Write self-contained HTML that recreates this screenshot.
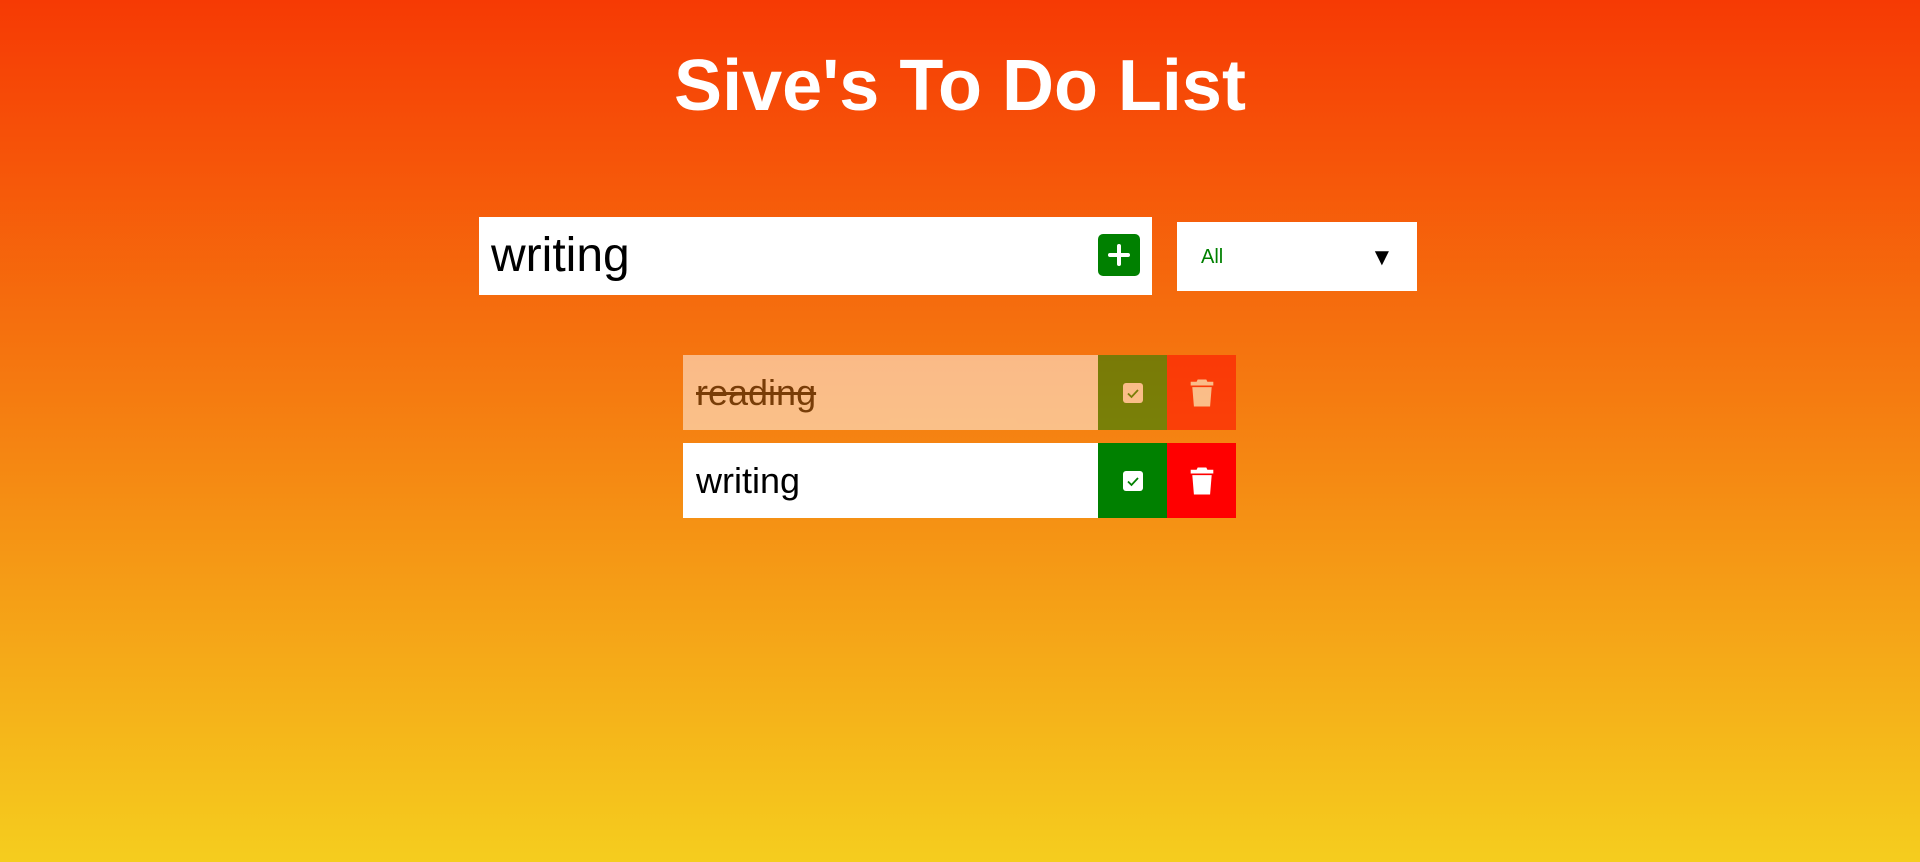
<!DOCTYPE html>
<html><head><style>
html,body{margin:0;padding:0;width:1920px;height:862px;overflow:hidden}
body{background:linear-gradient(to bottom,#f63a04 0%,#f57a10 45%,#f5cd1e 100%);font-family:"Liberation Sans",sans-serif;position:relative}
h1{position:absolute;left:0;right:0;top:40px;margin:0;text-align:center;color:#fff;font-size:72px;font-weight:bold;line-height:92px}
.input{position:absolute;left:479px;top:217px;width:673px;height:78px;background:#fff}
.input span{position:absolute;left:12px;top:12px;font-size:48px;line-height:54px;color:#000}
.plus{position:absolute;left:619px;top:17px;width:42px;height:42px;background:#008000;border-radius:5px}
.sel{position:absolute;left:1177px;top:222px;width:240px;height:69px;background:#fff}
.sel .t{position:absolute;left:24px;top:24px;font-size:20px;color:#008000}
.sel .a{position:absolute;left:193px;top:22px;font-size:24px;color:#000}
.row{position:absolute;left:683px;width:553px;height:75px;display:flex}
.row .txt{width:415px;background:#fff;font-size:36px;line-height:75px;padding-left:13px;box-sizing:border-box;color:#000}
.row .ck{width:69px;background:#008000;display:flex;align-items:center;justify-content:center}
.row .tr{width:69px;background:#ff0000;display:flex;align-items:center;justify-content:center}
.done{opacity:.5}
.done .txt{text-decoration:line-through}
</style></head><body>
<h1>Sive's To Do List</h1>
<div class="input"><span>writing</span>
<div class="plus"><svg width="42" height="42" viewBox="0 0 42 42"><path d="M21 12v18M12 21h18" stroke="#fff" stroke-width="4" stroke-linecap="round"/></svg></div></div>
<div class="sel"><span class="t">All</span><span class="a">▼</span></div>
<div class="row done" style="top:355px"><div class="txt">reading</div>
<div class="ck"><svg width="22" height="22" viewBox="0 0 22 22"><rect x="1" y="1" width="20" height="20" rx="3" fill="#fff"/><path d="M6 11.5l3.5 3.5 6.5-7" stroke="#008000" stroke-width="1.8" fill="none"/></svg></div>
<div class="tr"><svg width="24" height="28" viewBox="0 0 22 26"><path d="M7 0.5h8l1 2h5.5v3.5H0.5V2.5H6z" fill="#fff"/><path d="M2 7.5h18l-1.5 18H3.5z" fill="#fff"/></svg></div></div>
<div class="row" style="top:443px"><div class="txt">writing</div>
<div class="ck"><svg width="22" height="22" viewBox="0 0 22 22"><rect x="1" y="1" width="20" height="20" rx="3" fill="#fff"/><path d="M6 11.5l3.5 3.5 6.5-7" stroke="#008000" stroke-width="1.8" fill="none"/></svg></div>
<div class="tr"><svg width="24" height="28" viewBox="0 0 22 26"><path d="M7 0.5h8l1 2h5.5v3.5H0.5V2.5H6z" fill="#fff"/><path d="M2 7.5h18l-1.5 18H3.5z" fill="#fff"/></svg></div></div>
</body></html>
